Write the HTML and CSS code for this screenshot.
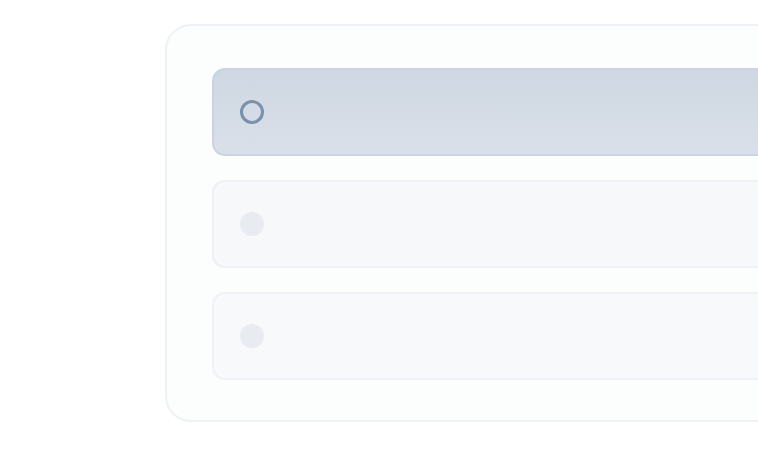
FILE: index.html
```html
<!DOCTYPE html>
<html>
<head>
<meta charset="utf-8">
<link rel="stylesheet" href="styles.css">
</head>
<body>
<div class="page">
  <div class="card">
    <div class="row row-active"><span class="radio radio-on"></span></div>
    <div class="row row-idle"><span class="radio radio-off"></span></div>
    <div class="row row-idle row-faint"><span class="radio radio-off"></span></div>
  </div>
</div>
</body>
</html>
```
FILE: styles.css
```css
html, body {
  margin: 0;
  padding: 0;
  background: #ffffff;
  font-family: "Inter", "Liberation Sans", sans-serif;
  overflow: hidden;
}
.page {
  width: 758px;
  height: 472px;
  padding: 24px 0 0 165px;
  box-sizing: border-box;
  overflow: hidden;
}
.card {
  width: 720px;
  height: 398px;
  box-sizing: border-box;
  border: 2px solid #eef1f5;
  border-radius: 26px;
  background: #fcfdfd;
  padding: 42px 0 0 45px;
  display: flex;
  flex-direction: column;
  gap: 24px;
}
.row {
  height: 88px;
  box-sizing: border-box;
  border-radius: 13px;
  display: flex;
  align-items: center;
  padding-left: 26px;
}
.row-active {
  background: linear-gradient(180deg, #cfd7e2 0%, #d9e0e9 100%);
  border: 2px solid #cad3df;
}
.row-idle {
  background: #f7f8fa;
  border: 2px solid #eef1f4;
}
.row-faint {
  background: #f8f9fb;
  border-color: #f0f2f5;
}
.radio {
  width: 24px;
  height: 24px;
  box-sizing: border-box;
  border-radius: 50%;
  display: block;
}
.radio-on {
  border: 3px solid #7a90ab;
}
.radio-off {
  background: #e8ebf0;
}
```
